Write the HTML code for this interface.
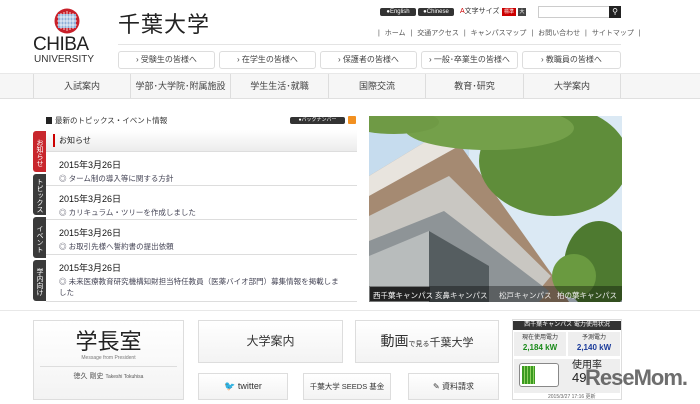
<!DOCTYPE html>
<html><head><meta charset="utf-8"><style>
*{margin:0;padding:0;box-sizing:border-box}
body{width:700px;height:404px;overflow:hidden;background:#fff;font-family:"Liberation Sans","Noto Sans CJK JP",sans-serif;color:#333;position:relative}
.a{position:absolute}
.btn{position:absolute;border:1px solid #ddd;border-radius:3px;background:#fff;font-size:8px;color:#444;text-align:center;line-height:16px}
.nav{position:absolute;top:74px;height:24px;font-size:9px;text-align:center;line-height:24px;color:#444;border-left:1px solid #ddd}
.row{position:absolute;left:46px;width:311px;border-bottom:1px solid #ddd;background:#fff}
.row b{display:block;font-size:9px;font-weight:normal;color:#111;margin:6px 0 0 13px}
.row i{display:block;font-style:normal;font-size:7.5px;color:#445;margin:2px 14px 0 13px;line-height:11px}
.tab{position:absolute;left:33px;width:13px;color:#fff;font-size:7px;line-height:13px;writing-mode:vertical-rl;text-align:center;border-radius:3px 0 0 3px;padding-top:2px;overflow:hidden}
.box{position:absolute;border:1px solid #ddd;background:linear-gradient(#fff,#f3f3f3);text-align:center;color:#333}
</style></head><body>
<svg class="a" style="left:54px;top:8px" width="26" height="26" viewBox="0 0 26 26"><circle cx="13" cy="13" r="12.5" fill="#c8202a"/><rect x="4" y="6" width="18" height="14" fill="#8fb0d8"/><path d="M7 5v16M10 4v18M13 3v20M16 4v18M19 5v16M3 9h20M3 13h20M3 17h20" stroke="#fff" stroke-width="0.8"/></svg>
<div class="a" style="left:33px;top:35px;font-size:19px;letter-spacing:-0.5px;color:#222;line-height:20px">CHIBA</div>
<div class="a" style="left:34px;top:54px;font-size:10px;color:#333;line-height:11px">UNIVERSITY</div>
<div class="a" style="left:118px;top:12px;font-size:22px;color:#222;line-height:26px;letter-spacing:1px">千葉大学</div>
<div class="a" style="left:118px;top:44px;width:503px;border-top:1px solid #e4e4e4"></div>
<div class="a" style="left:380px;top:8px;width:36px;height:8px;background:#333;border-radius:2px;color:#fff;font-size:6px;line-height:8px;text-align:center">●English</div>
<div class="a" style="left:418px;top:8px;width:36px;height:8px;background:#333;border-radius:2px;color:#fff;font-size:6px;line-height:8px;text-align:center">●Chinese</div>
<div class="a" style="left:460px;top:6px;font-size:7px;color:#333"><span style="color:#c00">A</span>文字サイズ</div>
<div class="a" style="left:502px;top:8px;width:14px;height:8px;background:#c00;color:#fff;font-size:5px;line-height:8px;text-align:center">標準</div>
<div class="a" style="left:518px;top:8px;width:8px;height:8px;background:#444;color:#fff;font-size:5px;line-height:8px;text-align:center">大</div>
<div class="a" style="left:538px;top:6px;width:72px;height:12px;border:1px solid #ccc"></div>
<div class="a" style="left:609px;top:6px;width:12px;height:12px;background:#222;color:#fff;font-size:8px;line-height:12px;text-align:center">&#9906;</div>
<div class="a" style="left:378px;top:28px;font-size:7px;color:#555;word-spacing:3px">| ホーム | 交通アクセス | キャンパスマップ | お問い合わせ | サイトマップ |</div>
<div class="btn" style="left:118px;top:51px;width:97px;height:18px">› 受験生の皆様へ</div>
<div class="btn" style="left:219px;top:51px;width:97px;height:18px">› 在学生の皆様へ</div>
<div class="btn" style="left:320px;top:51px;width:97px;height:18px">› 保護者の皆様へ</div>
<div class="btn" style="left:421px;top:51px;width:97px;height:18px">› 一般･卒業生の皆様へ</div>
<div class="btn" style="left:522px;top:51px;width:99px;height:18px">› 教職員の皆様へ</div>
<div class="a" style="left:0;top:73px;width:700px;height:26px;background:#f6f6f6;border-top:1px solid #e8e8e8;border-bottom:1px solid #e0e0e0"></div>
<div class="nav" style="left:33px;width:97px">入試案内</div>
<div class="nav" style="left:130px;width:100px">学部･大学院･附属施設</div>
<div class="nav" style="left:230px;width:98px">学生生活･就職</div>
<div class="nav" style="left:328px;width:97px">国際交流</div>
<div class="nav" style="left:425px;width:98px">教育･研究</div>
<div class="nav" style="left:523px;width:98px;border-right:1px solid #ddd">大学案内</div>
<div class="a" style="left:46px;top:117px;width:6px;height:7px;background:#222"></div>
<div class="a" style="left:55px;top:115px;font-size:7.5px;color:#333">最新のトピックス・イベント情報</div>
<div class="a" style="left:290px;top:117px;width:55px;height:7px;background:#333;border-radius:2px;color:#fff;font-size:5px;line-height:7px;text-align:center">●バックナンバー</div>
<div class="a" style="left:348px;top:116px;width:8px;height:8px;background:#f29020;border-radius:1px"></div>
<div class="a" style="left:46px;top:130px;width:311px;height:172px;border:1px solid #ddd"></div>
<div class="row" style="top:130px;height:22px;background:linear-gradient(#fff,#ececec)"><div class="a" style="left:7px;top:4px;width:2px;height:13px;background:#c00"></div><div class="a" style="left:13px;top:5px;font-size:8px;color:#222">お知らせ</div></div>
<div class="row" style="top:152px;height:34px"><b>2015年3月26日</b><i>◎ ターム制の導入等に関する方針</i></div>
<div class="row" style="top:186px;height:34px"><b>2015年3月26日</b><i>◎ カリキュラム・ツリーを作成しました</i></div>
<div class="row" style="top:220px;height:35px"><b>2015年3月26日</b><i>◎ お取引先様へ誓約書の提出依頼</i></div>
<div class="row" style="top:255px;height:47px"><b>2015年3月26日</b><i>◎ 未来医療教育研究機構知財担当特任教員（医薬バイオ部門）募集情報を掲載しました</i></div>
<div class="tab" style="top:131px;height:41px;background:#c8262c">お知らせ</div>
<div class="tab" style="top:174px;height:41px;background:#3a3a3a">トピックス</div>
<div class="tab" style="top:217px;height:41px;background:#3a3a3a">イベント</div>
<div class="tab" style="top:260px;height:41px;background:#3a3a3a">学内向け</div>
<svg class="a" style="left:369px;top:116px" width="253" height="186" viewBox="0 0 253 186">
<rect width="253" height="186" fill="#dbe9f4"/>
<path d="M0 0H100V40L0 60Z" fill="#c6dcee"/>
<path d="M0 60L79 12L182 157L200 186H0Z" fill="#a58a72"/>
<path d="M0 60L79 12L90 30L0 80Z" fill="#e8e4de"/>
<path d="M0 100L80 60L182 160L160 186H0Z" fill="#c9c7c2"/>
<path d="M0 125L75 95L180 175L170 186H0Z" fill="#8e9497"/>
<path d="M0 140L60 115V186H0Z" fill="#b8bcbc"/>
<path d="M60 115L120 150V186H60Z" fill="#555d60"/>
<ellipse cx="185" cy="45" rx="75" ry="55" fill="#5f8d3a"/>
<ellipse cx="120" cy="12" rx="85" ry="22" fill="#74a04a"/>
<ellipse cx="25" cy="6" rx="45" ry="12" fill="#6f9a45"/>
<ellipse cx="230" cy="150" rx="35" ry="45" fill="#4e7a30"/>
<ellipse cx="205" cy="160" rx="22" ry="22" fill="#6a9a40"/>
<rect y="170" width="253" height="16" fill="rgba(0,0,0,0.35)"/>
<rect x="1" y="171" width="60" height="14" fill="#222"/>
<text x="4" y="182" font-size="7.5" fill="#fff" font-family="Noto Sans CJK JP">西千葉キャンパス</text>
<text x="66" y="182" font-size="7.5" fill="#eee" font-family="Noto Sans CJK JP">亥鼻キャンパス</text>
<text x="130" y="182" font-size="7.5" fill="#eee" font-family="Noto Sans CJK JP">松戸キャンパス</text>
<text x="188" y="182" font-size="7.5" fill="#eee" font-family="Noto Sans CJK JP">柏の葉キャンパス</text>
</svg>
<div class="a" style="left:0;top:310px;width:700px;border-top:1px solid #e8e8e8"></div>
<div class="box" style="left:33px;top:320px;width:151px;height:80px">
<div style="font-size:22px;margin-top:8px;line-height:26px;color:#222">学長室</div>
<div style="font-size:5px;color:#777">Message from President</div>
<div style="border-top:1px solid #ddd;margin:5px 6px 0"></div>
<div style="font-size:7px;color:#555;margin-top:4px">徳久 剛史 <span style="font-size:5px">Takeshi Tokuhisa</span></div></div>
<div class="box" style="left:198px;top:320px;width:145px;height:43px;font-size:12px;line-height:41px">大学案内</div>
<div class="box" style="left:355px;top:320px;width:144px;height:43px;font-size:14px;line-height:41px">動画<span style="font-size:7px">で見る</span><span style="font-size:11px">千葉大学</span></div>
<div class="box" style="left:198px;top:373px;width:90px;height:27px;font-size:9px;line-height:25px"><span style="color:#333">🐦</span> twitter</div>
<div class="box" style="left:303px;top:373px;width:88px;height:27px;font-size:7.5px;line-height:25px">千葉大学 SEEDS 基金</div>
<div class="box" style="left:408px;top:373px;width:91px;height:27px;font-size:8px;line-height:25px">✎ 資料請求</div>
<div class="a" style="left:512px;top:319px;width:110px;height:81px;border:1px solid #ddd;background:#fff"></div>
<div class="a" style="left:513px;top:321px;width:108px;height:9px;background:#333;color:#fff;font-size:6px;line-height:9px;text-align:center">西千葉キャンパス 電力使用状況</div>
<div class="a" style="left:514px;top:332px;width:52px;height:24px;background:#eee;font-size:6px;text-align:center;line-height:9px;padding-top:2px">現在使用電力<br><b style="color:#1a8a1a;font-size:8px">2,184 kW</b></div>
<div class="a" style="left:568px;top:332px;width:52px;height:24px;background:#eee;font-size:6px;text-align:center;line-height:9px;padding-top:2px">予測電力<br><b style="color:#1a3a9a;font-size:8px">2,140 kW</b></div>
<div class="a" style="left:514px;top:359px;width:106px;height:34px;background:#eee"></div>
<div class="a" style="left:519px;top:363px;width:40px;height:24px;border:1px solid #888;border-radius:3px;background:#fff"></div>
<div class="a" style="left:522px;top:366px;width:13px;height:18px;background:repeating-linear-gradient(90deg,#3a9a20 0 2px,#8fd060 2px 3px)"></div>
<div class="a" style="left:572px;top:360px;font-size:10px;color:#222;line-height:12px">使用率<br><span style="font-size:13px">49</span></div>
<div class="a" style="left:548px;top:393px;font-size:5px;color:#666">2015/3/27 17:16 更新</div>
<div class="a" style="left:585px;top:365px;font-size:22px;font-weight:bold;color:#555;opacity:.85;letter-spacing:-1px">ReseMom.</div>
</body></html>
